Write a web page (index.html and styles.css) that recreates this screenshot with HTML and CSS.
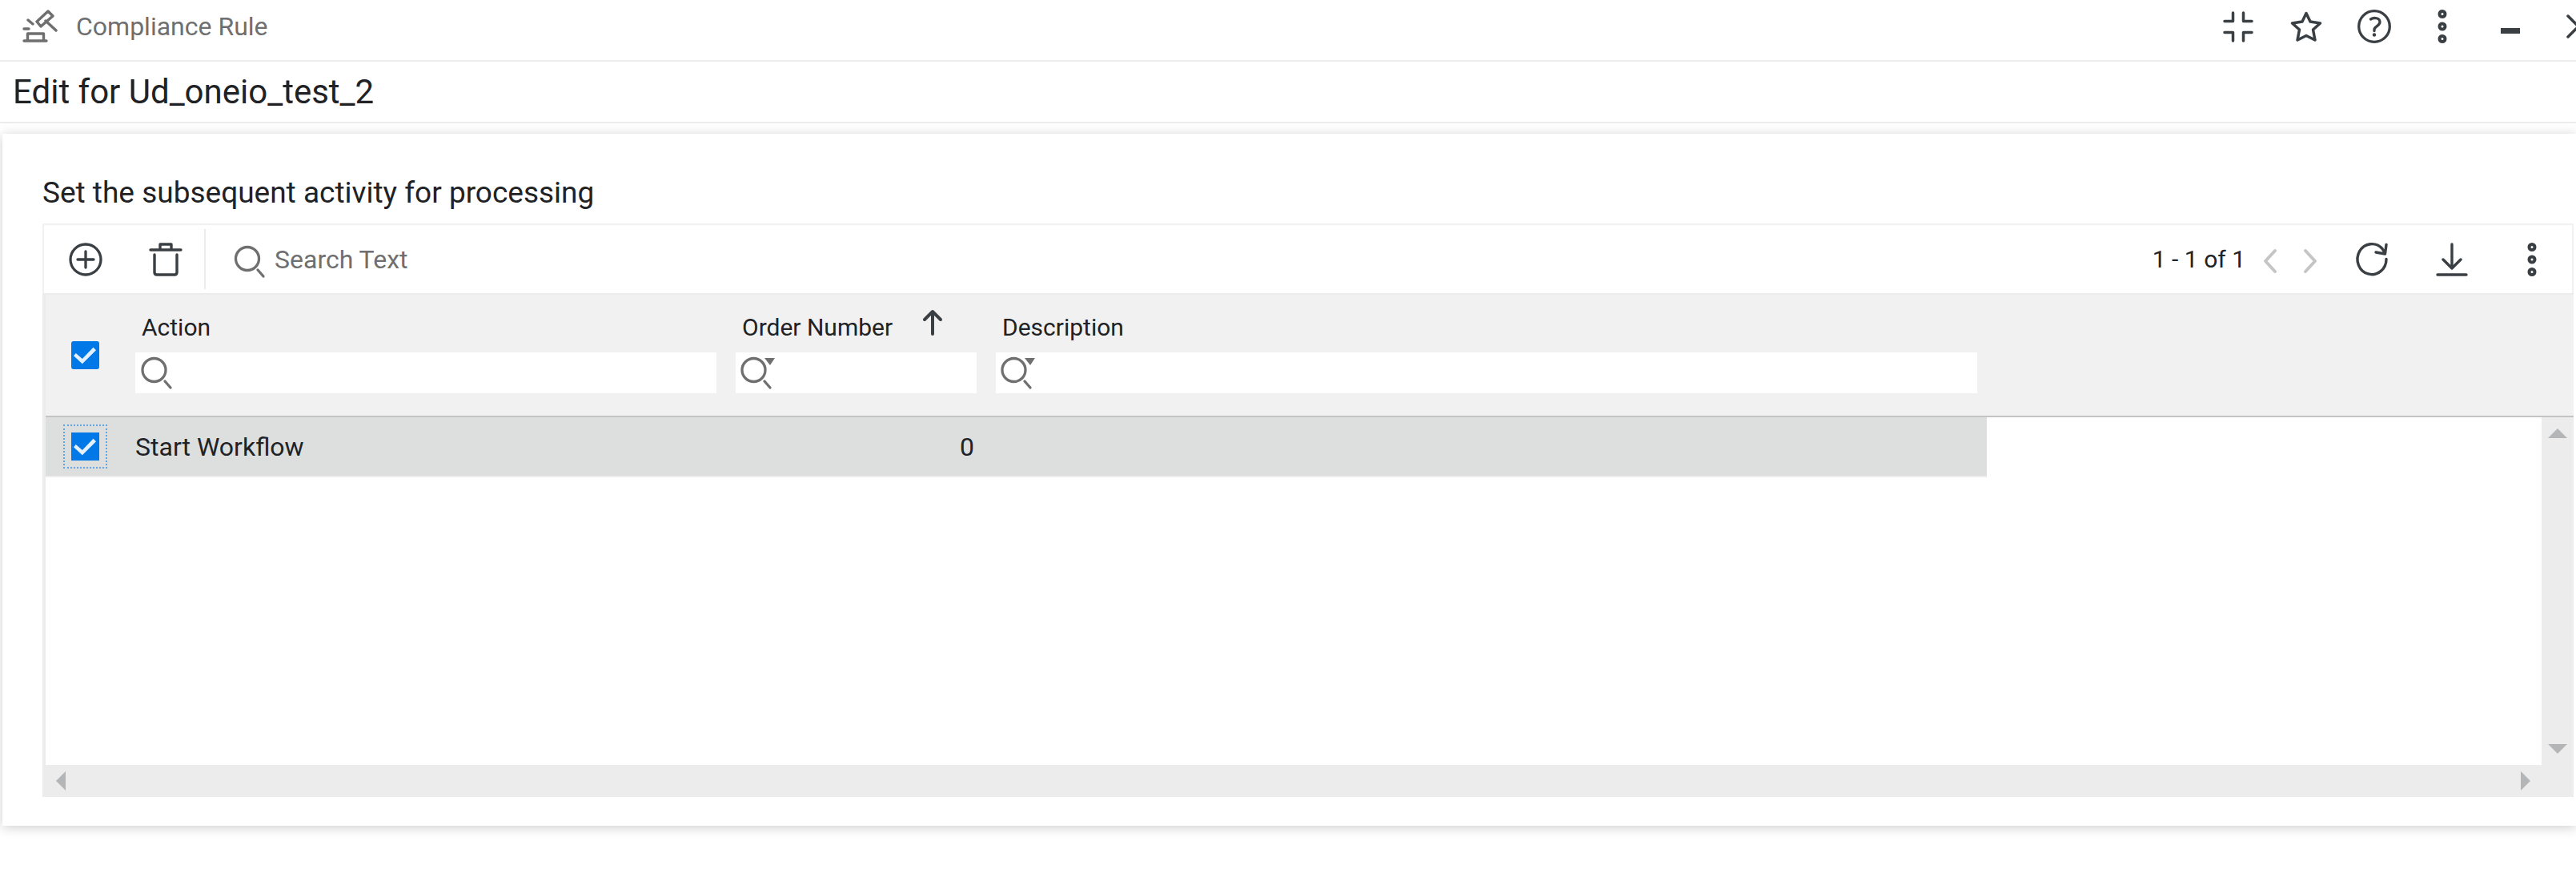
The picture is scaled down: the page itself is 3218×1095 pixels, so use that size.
FILE: index.html
```html
<!DOCTYPE html>
<html lang="en">
<head>
<meta charset="utf-8">
<title>Compliance Rule</title>
<link rel="stylesheet" href="styles.css">
</head>
<body>
<header class="app-bar">
  <svg class="app-icon" viewBox="0 0 44 44" stroke-width="3.400" aria-hidden="true"><path d="M2 40h28M6.500 39v-8h20v8M2 25h6M7 14l6 5M32 3l6 6-15 13-5-6zM29 15l13 12"/></svg>
  <span class="app-name">Compliance Rule</span>
  <nav class="window-actions">
    <button class="window-button" aria-label="Collapse"><svg class="icon" viewBox="0 0 44 44" stroke-width="3.500"><path d="M5 15.500h10.500V5M39 15.500H28.500V5M5 29.500h10.500V40M39 29.500H28.500V40"/></svg></button>
    <button class="window-button" aria-label="Favourite"><svg class="icon" viewBox="0 0 44 44" stroke-width="3.500"><path d="M22 5.500l5 10.500 12.500 2-9 8 2.500 13L22 33.500l-11 5.500 2.500-13-9-8L17 16z"/></svg></button>
    <button class="window-button" aria-label="Help"><svg class="icon" viewBox="0 0 44 44" stroke-width="3.300"><circle cx="22" cy="22" r="19.300"/><path d="M17.500 13c4-2.500 11.500-2 11.500 3.500 0 5-7 5-7 9.500v1.500"/><circle class="solid flat" cx="22" cy="32.500" r="2.200"/></svg></button>
    <button class="window-button" aria-label="More"><svg class="icon" viewBox="0 0 44 44" stroke-width="4"><circle cx="22" cy="6.500" r="3.500"/><circle cx="22" cy="22" r="3.500"/><circle cx="22" cy="37.500" r="3.500"/></svg></button>
    <button class="window-button" aria-label="Minimize"><svg class="icon" viewBox="0 0 44 44"><path class="solid flat" d="M10 24h24v7H10z"/></svg></button>
    <button class="window-button" aria-label="Close"><svg class="icon" viewBox="0 0 44 44" stroke-width="3.500"><path d="M9 9l26 26M35 9L9 35"/></svg></button>
  </nav>
</header>
<div class="title-bar"><h1 class="title">Edit for Ud_oneio_test_2</h1></div>
<main class="card">
  <h2 class="section-title">Set the subsequent activity for processing</h2>
  <div class="toolbar">
    <button class="tool-button" aria-label="Add"><svg class="icon" viewBox="0 0 44 44" stroke-width="3.300"><circle cx="22" cy="22" r="19"/><path d="M22 12v20M12 22h20"/></svg></button>
    <button class="tool-button" aria-label="Delete"><svg class="icon" viewBox="0 0 44 44" stroke-width="3.400"><path d="M3 10h38M15 9V3h14v6M8 16v22q0 3 3 3h22q3 0 3-3V16"/></svg></button>
    <label class="toolbar-search">
      <svg class="icon muted" viewBox="0 0 44 44" stroke-width="3.300"><circle cx="19" cy="21" r="14.500"/><path d="M32 35l7 8"/></svg>
      <input class="search-input" type="text" placeholder="Search Text" aria-label="Search Text">
    </label>
    <span class="range">1 - 1 of 1</span>
    <span class="pager">
      <button class="page-button" aria-label="Previous page" disabled><svg class="icon disabled" viewBox="0 0 44 44" stroke-width="4"><path d="M28 11L16 24l12 13"/></svg></button>
      <button class="page-button" aria-label="Next page" disabled><svg class="icon disabled" viewBox="0 0 44 44" stroke-width="4"><path d="M16 11l12 13-12 13"/></svg></button>
    </span>
    <button class="tool-button" aria-label="Refresh"><svg class="icon" viewBox="0 0 44 44" stroke-width="3.400"><path d="M40 21.500a18 19 0 1 1-5-13l3 5M40 3.500l-1.500 11.500L27 13"/></svg></button>
    <button class="tool-button" aria-label="Download"><svg class="icon" viewBox="0 0 44 44" stroke-width="3.400"><path d="M22 3v30M11 22l11 11 11-11M4 41h36"/></svg></button>
    <button class="tool-button" aria-label="More options"><svg class="icon" viewBox="0 0 44 44" stroke-width="4"><circle cx="22" cy="6.500" r="3.500"/><circle cx="22" cy="22" r="3.500"/><circle cx="22" cy="37.500" r="3.500"/></svg></button>
  </div>
  <div class="grid">
    <table class="table">
      <colgroup><col class="col-check"><col class="col-action"><col class="col-order"><col class="col-description"><col></colgroup>
      <thead>
        <tr>
          <th class="check-cell"><input class="checkbox" type="checkbox" checked aria-label="Select all"></th>
          <th class="head-cell">
            <label class="head-label" for="filter-action">Action</label>
            <div class="filter"><svg class="icon muted" viewBox="0 0 44 44" stroke-width="3.300"><circle cx="18.500" cy="18" r="14.500"/><path d="M32 32l7 8"/></svg><input class="filter-input" id="filter-action" type="text"></div>
          </th>
          <th class="head-cell">
            <label class="head-label" for="filter-order">Order Number <svg class="icon sort" viewBox="0 0 44 44" stroke-width="4"><path d="M22 31V3M12 13L22 3l10 10"/></svg></label>
            <div class="filter"><svg class="icon muted" viewBox="0 0 44 44" stroke-width="3.300"><circle cx="17.500" cy="18" r="14.500"/><path d="M31 32l7 8"/><path class="solid flat" d="M31 3h13l-6 9z"/></svg><input class="filter-input" id="filter-order" type="text"></div>
          </th>
          <th class="head-cell">
            <label class="head-label" for="filter-description">Description</label>
            <div class="filter"><svg class="icon muted" viewBox="0 0 44 44" stroke-width="3.300"><circle cx="17.500" cy="18" r="14.500"/><path d="M31 32l7 8"/><path class="solid flat" d="M31 3h13l-6 9z"/></svg><input class="filter-input" id="filter-description" type="text"></div>
          </th>
          <th class="head-cell"></th>
        </tr>
      </thead>
      <tbody>
        <tr>
          <td class="cell check-cell"><input class="checkbox focused" type="checkbox" checked aria-label="Select Start Workflow"></td>
          <td class="cell">Start Workflow</td>
          <td class="cell number">0</td>
          <td class="cell"></td>
          <td></td>
        </tr>
      </tbody>
    </table>
    <div class="scroll-vertical">
      <svg class="arrow" viewBox="0 0 24 24"><path d="M0 18L12 6l12 12z"/></svg>
      <svg class="arrow" viewBox="0 0 24 24"><path d="M0 6l12 12L24 6z"/></svg>
    </div>
    <div class="scroll-horizontal">
      <svg class="arrow" viewBox="0 0 24 24"><path d="M18 0L6 12l12 12z"/></svg>
      <svg class="arrow" viewBox="0 0 24 24"><path d="M6 0l12 12L6 24z"/></svg>
    </div>
  </div>
</main>
</body>
</html>
```
FILE: styles.css
```css
* {
  box-sizing: border-box;
}

body {
  min-height: 100vh;
  margin: 0;
  overflow-x: hidden;
  background: #fff;
  color: #202225;
  font-family: Roboto, "Liberation Sans", sans-serif;
  font-size: 32px;
  font-weight: 400;
}

button {
  display: flex;
  align-items: center;
  justify-content: center;
  flex: none;
  padding: 0;
  border: 0;
  background: none;
}

input {
  min-width: 0;
  border: 0;
  outline: 0;
  background: transparent;
  color: inherit;
  font: inherit;
}

.icon {
  flex: none;
  width: 44px;
  height: 44px;
  overflow: visible;
  fill: none;
  stroke: #3a3f44;
  stroke-linecap: round;
  stroke-linejoin: round;
  color: #3a3f44;
}

.icon.muted {
  stroke: #6f6f6f;
  color: #6f6f6f;
}

.icon.disabled {
  stroke: #c4c5c6;
}

.icon .solid {
  fill: currentColor;
}

.icon .flat {
  stroke: none;
}

.app-bar {
  display: flex;
  align-items: center;
  height: 77px;
  padding: 0 0 10px 28px;
  border-bottom: 2px solid #ececec;
}

.app-icon {
  width: 44px;
  height: 44px;
  fill: none;
  stroke: #6f6f6f;
  stroke-linejoin: round;
  stroke-linecap: round;
}

.app-name {
  margin-left: 23px;
  color: #6f6f6f;
  font-size: 32px;
}

.window-actions {
  display: flex;
  margin-left: auto;
  margin-right: -45px;
}

.window-button {
  width: 85px;
  height: 44px;
}

.title-bar {
  display: flex;
  align-items: center;
  height: 77px;
  padding: 0 0 0 16px;
  border-bottom: 2px solid #ececec;
}

.title {
  margin: 0;
  font-size: 42px;
  font-weight: 400;
}

.card {
  margin: 13px 0 0 3px;
  padding: 48px 3px 36px 50px;
  box-shadow: 0 2px 14px rgba(0, 0, 0, 0.2);
}

.section-title {
  margin: 0 0 12px;
  font-size: 37px;
  font-weight: 400;
  line-height: 52px;
}

.toolbar {
  display: flex;
  align-items: center;
  height: 87px;
  padding: 0 0 0 2px;
  border: 2px solid #f1f1f1;
  border-bottom: 0;
}

.tool-button {
  width: 100px;
  height: 75px;
}

.toolbar-search {
  display: flex;
  flex: 1;
  align-items: center;
  height: 75px;
  margin-left: -2px;
  padding-left: 33px;
  border-left: 2px solid #ececec;
}

.search-input {
  flex: 1;
  padding: 0 9px;
}

.search-input::placeholder {
  color: #6f6f6f;
  opacity: 1;
}

.range {
  margin-right: 6px;
  font-size: 30px;
}

.pager {
  display: flex;
  margin-right: 2px;
}

.page-button {
  width: 50px;
  height: 75px;
}

.grid {
  display: grid;
  grid-template-columns: 1fr 40px;
  grid-template-rows: 155px 434px 40px;
  border-left: 4px solid #ececec;
}

.table {
  grid-area: 1 / 1 / 3 / 3;
  align-self: start;
  width: 100%;
  border-collapse: separate;
  border-spacing: 0;
  table-layout: fixed;
}

.col-check {
  width: 100px;
}

.col-action {
  width: 750px;
}

.col-order {
  width: 325px;
}

.col-description {
  width: 1250px;
}

th {
  padding: 0;
  border-top: 2px solid #ececec;
  border-bottom: 2px solid #c4c4c4;
  background: #f1f1f1;
  font-weight: 400;
  text-align: left;
}

.head-cell {
  padding: 20px 12px 28px;
  vertical-align: top;
}

.head-label {
  display: flex;
  align-items: center;
  height: 40px;
  margin-bottom: 12px;
  padding-left: 8px;
  font-size: 30px;
}

.sort {
  margin-left: 28px;
}

.filter {
  display: flex;
  align-items: center;
  height: 51px;
  padding-left: 5px;
  background: #fff;
}

.filter-input {
  flex: 1;
}

.cell {
  height: 75px;
  padding: 0 12px;
  border-bottom: 2px solid #ececec;
  background: #dddede;
}

.check-cell,
.cell.check-cell {
  padding: 0 2px 0 0;
  text-align: center;
  vertical-align: middle;
}

.cell.number {
  padding-right: 15px;
  text-align: right;
}

.checkbox {
  display: block;
  width: 35px;
  height: 35px;
  margin: 0 auto;
  appearance: none;
  border-radius: 3px;
  background: #0078e8;
}

.checkbox::before {
  content: "";
  display: block;
  width: 35px;
  height: 35px;
  background: #e4f1fd;
  clip-path: polygon(10% 52%, 18% 43%, 41% 63%, 80% 22%, 90% 32%, 41% 81%);
}

.checkbox.focused {
  border-radius: 0;
  outline: 2px dotted #62a4df;
  outline-offset: 8px;
}

.scroll-vertical,
.scroll-horizontal {
  display: flex;
  align-items: center;
  justify-content: space-between;
  background: #ececec;
}

.scroll-vertical {
  grid-area: 2 / 2;
  flex-direction: column;
  padding: 8px 0;
}

.scroll-horizontal {
  grid-area: 3 / 1 / 4 / 3;
  padding: 0 48px 0 7px;
}

.arrow {
  width: 24px;
  height: 24px;
  fill: #b3b5b7;
}
```
